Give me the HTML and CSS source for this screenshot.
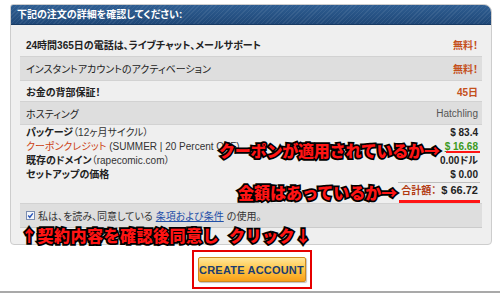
FILE: index.html
```html
<!DOCTYPE html>
<html>
<head>
	<meta charset="UTF-8">
	<title>注文の詳細</title>
	<link rel="stylesheet" href="styles.css">
</head>
<body>
	<div class="page">
		<div class="panel">
			<div class="panel-head">下記の注文の詳細を確認してください:</div>
			<div class="panel-body">
				<div class="row row-1">
					<b>24時間365日の電話は、ライブチャット、メールサポート</b>
					<span class="free">無料！</span>
				</div>
				<div class="row row-2 alt">
					<span>インスタントアカウントのアクティベーション</span>
					<span class="free">無料！</span>
				</div>
				<div class="row row-3">
					<b>お金の背部保証！</b>
					<span class="free">45日</span>
				</div>
				<div class="row row-4 alt">
					<span>ホスティング</span>
					<span class="plan">Hatchling</span>
				</div>
				<div class="row row-detail">
					<div class="labels">
						<div><b>パッケージ</b>（12ヶ月サイクル）</div>
						<div><b class="coupon">クーポンクレジット</b> (SUMMER | 20 Percent OFF)</div>
						<div><b>既存のドメイン</b>（rapecomic.com）</div>
						<div><b>セットアップの価格</b></div>
					</div>
					<div class="amounts">
						<div>$ 83.4</div>
						<div class="discount">$ 16.68</div>
						<div>0.00ドル</div>
						<div>$ 0.00</div>
						<div class="total"><span>合計額：</span> $ 66.72</div>
					</div>
				</div>
				<div class="row row-agree alt">
					<label class="agree">
						<svg class="check" width="9" height="9" viewBox="0 0 9 9">
							<rect x="0.5" y="0.5" width="8" height="8" fill="#f4f6fa" stroke="#7b8db0"/>
							<polyline points="2.2 4.6 3.8 6.3 6.8 2.4" fill="none" stroke="#2a55b8" stroke-width="1.4"/>
						</svg>
						私は、を読み、同意している<a href="">条項および条件</a>の使用。
					</label>
				</div>
			</div>
		</div>

		<div class="submit">
			<div class="submit-frame">
				<button class="create">CREATE ACCOUNT</button>
			</div>
		</div>

		<!-- 注釈 -->
		<span class="note note-coupon">クーポンが適用されているか→</span>
		<span class="mark mark-coupon"></span>
		<span class="note note-total">金額はあっているか→</span>
		<span class="mark mark-total"></span>
		<span class="note note-click">↑契約内容を確認後同意し<span class="gap"></span>クリック↓</span>
	</div>
</body>
</html>
```

FILE: styles.css
```css
:root {
	--row-alt: #dedede;
	--panel-bg: #efefef;
	--line: #d2d2d2;
	--orange: #c4501c;
	--red: #ff1414;
}
* {
	box-sizing: border-box;
}
body {
	margin: 0;
	background: #fff;
	font-family: "Liberation Sans", "Noto Sans CJK JP", sans-serif;
	font-size: 10px;
	color: #222;
	font-feature-settings: "palt";
}
.page {
	position: relative;
	width: 500px;
	height: 293px;
	padding-top: 4px;
	border-bottom: 2px solid #a9a9a9;
	display: flex;
	flex-direction: column;
}
.panel {
	margin-left: 10px;
	width: 482px;
	background: var(--panel-bg);
	border: 1px solid #cdcdcd;
	border-radius: 3px 8px 4px 4px;
	overflow: hidden;
}
.panel-head {
	height: 20px;
	line-height: 20px;
	padding-left: 6px;
	color: #fff;
	font-weight: bold;
	background:
		repeating-linear-gradient(-45deg, rgba(255,255,255,.07) 0 1px, transparent 1px 3px),
		linear-gradient(#2f5e92, #1f4878);
	border-bottom: 1px solid #173a63;
}
.panel-body {
	padding: 8px 9px 16px 9px;
}
.row {
	display: flex;
	justify-content: space-between;
	align-items: center;
	padding: 0 4px 0 6px;
	border-top: 1px solid var(--line);
}
.row.alt {
	background: var(--row-alt);
}
.row-1 {
	height: 23px;
	border-top: 0;
}
.row-2 {
	height: 24px;
}
.row-3 {
	height: 21px;
}
.row-4 {
	height: 23px;
}
.free {
	color: var(--orange);
	font-weight: bold;
}
.plan {
	color: #555;
}
.row-detail {
	align-items: flex-start;
	padding-top: 1px;
	padding-bottom: 5px;
	line-height: 14px;
}
.labels b {
	color: #222;
}
.labels .coupon {
	color: #cc3f12;
	font-weight: normal;
}
.labels div {
	color: #333;
}
.amounts {
	width: 82px;
	text-align: right;
	font-weight: bold;
	margin-right: -2px;
}
.amounts div {
	padding-right: 2px;
}
.discount {
	color: #3c9a22;
	text-decoration: underline;
}
.total {
	border-top: 1px solid #bdbdbd;
	font-size: 11px;
}
.total span {
	color: #b23a12;
	font-size: 10px;
	margin-right: 2px;
}
.row-agree {
	height: 25px;
	border-bottom: 1px solid #cbcbcb;
}
.agree {
	display: flex;
	align-items: center;
	gap: 3px;
	color: #333;
}
.agree a {
	color: #1f4fa8;
}
.submit {
	display: flex;
	justify-content: center;
	padding-left: 3px;
	margin-top: 5px;
}
.submit-frame {
	border: 2px solid #e60000;
	padding: 5px 4px;
}
.create {
	display: block;
	width: 108px;
	height: 25px;
	padding: 0;
	font-family: "Liberation Sans", sans-serif;
	font-size: 11px;
	font-weight: bold;
	letter-spacing: .2px;
	color: #1b3c70;
	border: 1px solid #d08a1c;
	border-radius: 2px;
	background: linear-gradient(#ffe69a, #ffc545 50%, #f7a01a);
	box-shadow: 1px 1px 1px rgba(0,0,0,.25);
}
.note {
	position: absolute;
	font-family: "Noto Sans CJK JP", sans-serif;
	font-size: 16px;
	font-weight: 900;
	line-height: 18px;
	color: var(--red);
	-webkit-text-stroke: 3.5px #000;
	paint-order: stroke fill;
	white-space: nowrap;
	font-feature-settings: normal;
}
.note .gap {
	display: inline-block;
	width: 10px;
}
.note-coupon {
	left: 219px;
	top: 141px;
	letter-spacing: -.2px;
}
.note-total {
	left: 238px;
	top: 183px;
}
.note-click {
	left: 21px;
	top: 226px;
	letter-spacing: .5px;
}
.mark {
	position: absolute;
	background: var(--red);
}
.mark-coupon {
	left: 446px;
	top: 151px;
	width: 34px;
	height: 2px;
}
.mark-total {
	left: 399px;
	top: 200px;
	width: 81px;
	height: 3px;
}
```
